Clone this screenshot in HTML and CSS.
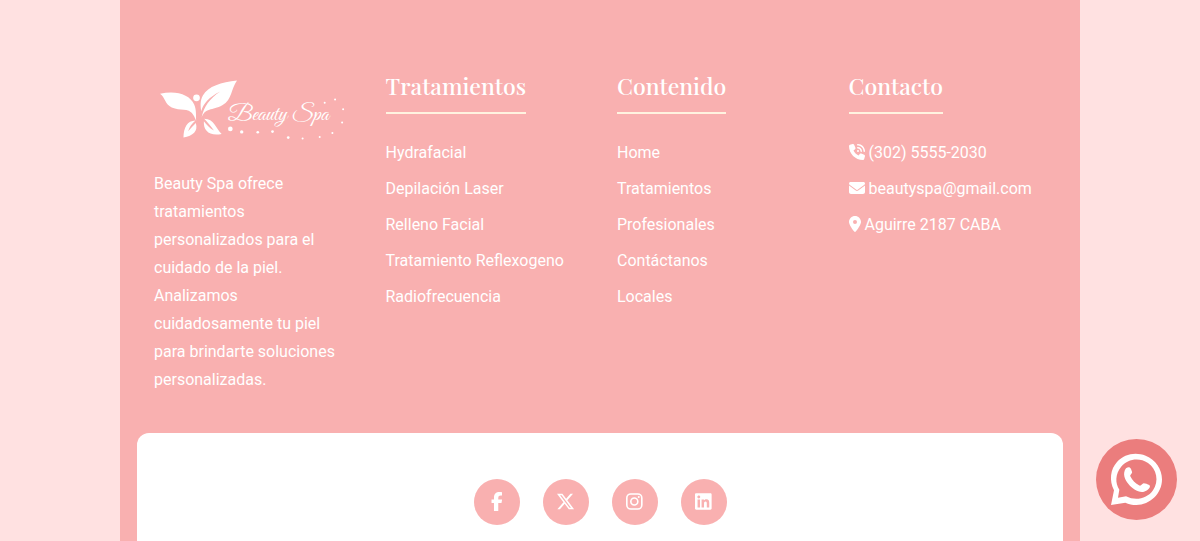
FILE: index.html
```html
<!DOCTYPE html>
<html lang="es">
<head>
<meta charset="utf-8">
<meta name="viewport" content="width=device-width, initial-scale=1">
<title>Beauty Spa</title>
<link rel="stylesheet" href="styles.css">
</head>
<body>
<footer class="footer">
  <div class="columns">
    <section class="column">
      <svg class="logo" viewBox="12 0 590 240" role="img" aria-label="Beauty Spa">
        <g fill="#fff">
          <path d="M30 71C78 60 119 73 132 103C139 119 137 134 138 152C132 134 119 115 84 91C108 108 124 123 129 132C113 112 91 123 65 112C44 102 46 83 30 71Z"/>
          <path d="M260 31C213 36 174 48 158 76C149 92 151 108 153 123C158 103 176 80 210 64C179 84 160 110 154 143C163 112 187 121 216 105C246 88 242 55 260 31Z"/>
          <path d="M100 202C101 171 111 152 136 151C126 159 117 171 114 183C122 174 129 166 137 158C144 184 129 195 100 202Z"/>
          <path d="M162 146C191 146 197 175 214 191C177 198 159 181 161 153C168 163 179 174 191 181C183 170 172 157 162 146Z"/>
          <circle cx="139" cy="83" r="10"/>
          <circle cx="240" cy="176" r="7"/>
          <circle cx="274" cy="185" r="5"/>
          <circle cx="322" cy="186" r="4"/>
          <circle cx="366" cy="184" r="4"/>
          <circle cx="413" cy="202" r="4"/>
          <circle cx="456" cy="205" r="3"/>
          <circle cx="507" cy="200" r="3"/>
          <circle cx="545" cy="188" r="3"/>
          <circle cx="574" cy="157" r="3"/>
          <circle cx="577" cy="117" r="3"/>
          <circle cx="553" cy="88" r="3"/>
          <circle cx="522" cy="98" r="3"/>
        </g>
        <text class="logo-text" x="233" y="149">Beauty Spa</text>
      </svg>
      <p class="about">Beauty Spa ofrece tratamientos personalizados para el cuidado de la piel. Analizamos cuidadosamente tu piel para brindarte soluciones personalizadas.</p>
    </section>
    <section class="column">
      <h2 class="title">Tratamientos</h2>
      <ul class="links">
        <li><a href="#">Hydrafacial</a></li>
        <li><a href="#">Depilación Laser</a></li>
        <li><a href="#">Relleno Facial</a></li>
        <li><a href="#">Tratamiento Reflexogeno</a></li>
        <li><a href="#">Radiofrecuencia</a></li>
      </ul>
    </section>
    <section class="column">
      <h2 class="title">Contenido</h2>
      <ul class="links">
        <li><a href="#">Home</a></li>
        <li><a href="#">Tratamientos</a></li>
        <li><a href="#">Profesionales</a></li>
        <li><a href="#">Contáctanos</a></li>
        <li><a href="#">Locales</a></li>
      </ul>
    </section>
    <section class="column">
      <h2 class="title">Contacto</h2>
      <ul class="links">
        <li><a href="#"><svg class="icon" viewBox="0 0 512 512" aria-hidden="true"><path d="M280 0C408.1 0 512 103.9 512 232c0 13.3-10.7 24-24 24s-24-10.7-24-24c0-101.6-82.4-184-184-184c-13.3 0-24-10.7-24-24s10.7-24 24-24zm8 192a32 32 0 1 1 0 64 32 32 0 1 1 0-64zm-32-72c0-13.3 10.7-24 24-24c75.1 0 136 60.9 136 136c0 13.3-10.7 24-24 24s-24-10.7-24-24c0-48.6-39.4-88-88-88c-13.3 0-24-10.7-24-24zM117.5 1.4c19.4-5.3 39.7 4.6 47.4 23.2l40 96c6.8 16.3 2.1 35.2-11.6 46.3L144 207.3c33.3 70.4 90.3 127.4 160.7 160.7L345 318.7c11.2-13.7 30-18.4 46.3-11.6l96 40c18.6 7.7 28.5 28 23.2 47.4l-24 88C481.8 499.9 466 512 448 512C200.6 512 0 311.4 0 64C0 46 12.1 30.2 29.5 25.4l88-24z"/></svg> (302) 5555-2030</a></li>
        <li><a href="#"><svg class="icon" viewBox="0 0 512 512" aria-hidden="true"><path d="M48 64C21.5 64 0 85.5 0 112c0 15.1 7.1 29.3 19.2 38.4L236.8 313.6c11.4 8.5 27 8.5 38.4 0L492.8 150.4c12.1-9.1 19.2-23.3 19.2-38.4c0-26.5-21.5-48-48-48H48zM0 176V384c0 35.3 28.7 64 64 64H448c35.3 0 64-28.7 64-64V176L294.4 339.2c-22.8 17.1-54 17.1-76.8 0L0 176z"/></svg> beautyspa@gmail.com</a></li>
        <li><a href="#"><svg class="icon icon-pin" viewBox="0 0 384 512" aria-hidden="true"><path d="M215.7 499.2C267 435 384 279.4 384 192C384 86 298 0 192 0S0 86 0 192c0 87.4 117 243 168.3 307.2c12.3 15.3 35.1 15.3 47.4 0zM192 128a64 64 0 1 1 0 128 64 64 0 1 1 0-128z"/></svg> Aguirre 2187 CABA</a></li>
      </ul>
    </section>
  </div>
  <div class="panel">
    <nav class="social" aria-label="Redes sociales">
      <a class="social-link" href="#" aria-label="Facebook"><svg viewBox="0 0 320 512" aria-hidden="true"><path d="M80 299.3V512H196V299.3h86.5l18-97.8H196V166.9c0-51.7 20.3-71.5 72.7-71.5c16.3 0 29.4 .4 37 1.2V7.9C291.4 4 256.4 0 236.2 0C129.3 0 80 50.5 80 159.4v42.1H14v97.8H80z"/></svg></a>
      <a class="social-link" href="#" aria-label="X"><svg viewBox="0 0 512 512" aria-hidden="true"><path d="M389.2 48h70.6L305.6 224.2 487 464H345L233.7 318.6 106.5 464H35.8L200.7 275.5 26.8 48H172.4L272.9 180.9 389.2 48zM364.4 421.8h39.1L151.1 88h-42L364.4 421.8z"/></svg></a>
      <a class="social-link" href="#" aria-label="Instagram"><svg viewBox="0 0 448 512" aria-hidden="true"><rect x="22" y="54" width="404" height="404" rx="108" fill="none" stroke="#fff" stroke-width="44"/><circle cx="224" cy="256" r="94" fill="none" stroke="#fff" stroke-width="44"/><circle cx="344" cy="136" r="27"/></svg></a>
      <a class="social-link" href="#" aria-label="LinkedIn"><svg viewBox="0 0 448 512" aria-hidden="true"><path d="M416 32H31.9C14.3 32 0 46.5 0 64.3v383.4C0 465.5 14.3 480 31.9 480H416c17.6 0 32-14.5 32-32.3V64.3c0-17.8-14.4-32.3-32-32.3zM135.4 416H69V202.2h66.5V416zm-33.2-243c-21.3 0-38.5-17.3-38.5-38.5S80.9 96 102.2 96c21.2 0 38.5 17.3 38.5 38.5 0 21.3-17.2 38.5-38.5 38.5zm282.1 243h-66.4V312c0-24.8-.5-56.7-34.5-56.7-34.6 0-39.9 27-39.9 54.9V416h-66.4V202.2h63.7v29.2h.9c8.9-16.8 30.6-34.5 62.9-34.5 67.2 0 79.7 44.3 79.7 101.9V416z"/></svg></a>
    </nav>
  </div>
</footer>
<a class="whatsapp" href="#" aria-label="WhatsApp">
  <svg viewBox="0 0 243 243" aria-hidden="true">
    <path fill="#fff" fill-rule="evenodd" d="M45 198L54 154C39 124 43 91 63 69C85 44 119 38 149 50C179 62 198 90 198 121C198 164 162 198 121 198C109 198 98 195 88 191ZM66 176L90 172C119 187 154 179 171 154C190 126 182 90 156 72C129 54 94 60 75 84C58 105 57 132 70 152Z"/>
    <path fill="#fff" d="M90 88C97 83 102 84 105 90L108 98C110 103 101 107 103 112C109 124 117 132 129 139C135 143 138 134 143 133C148 133 155 136 160 138C167 145 152 156 144 158C128 162 108 149 98 136C87 123 78 104 90 88Z"/>
  </svg>
</a>
</body>
</html>
```
FILE: styles.css
```css
* {
  box-sizing: border-box;
}

body {
  margin: 0;
  background: #ffe1e1;
  color: #fff;
  font-family: Roboto, sans-serif;
  font-size: 16px;
}

a {
  color: inherit;
  text-decoration: none;
}

.footer {
  display: flex;
  flex-direction: column;
  width: 80%;
  min-height: 100vh;
  margin: 0 auto;
  padding: 70px 17px 0;
  background: #f9b0b0;
}

.columns {
  display: grid;
  grid-template-columns: repeat(4, minmax(0, 1fr));
  padding-bottom: 39px;
}

.column {
  padding: 0 17px;
}

.logo {
  display: block;
  width: 100%;
}

.logo-text {
  fill: #fff;
  font-family: "Great Vibes", "Dancing Script", "Liberation Serif", serif;
  font-size: 68px;
}

.about {
  margin: 20px 0 0;
  line-height: 28px;
}

.title {
  width: fit-content;
  margin: 0 0 21px;
  padding-bottom: 10px;
  border-bottom: 2px solid #fff3e0;
  font-family: "Playfair Display", "Liberation Serif", serif;
  font-size: 23px;
  font-weight: 500;
  line-height: 32px;
}

.links {
  margin: 0;
  padding: 0;
  list-style: none;
  line-height: 36px;
  white-space: nowrap;
}

.icon {
  width: 16px;
  height: 16px;
  fill: #fff;
  vertical-align: -2px;
}

.icon-pin {
  width: 12px;
}

.panel {
  flex: 1;
  padding: 46px 16px 16px;
  border-radius: 12px 12px 0 0;
  background: #fff;
}

.social {
  display: flex;
  justify-content: center;
  gap: 23px;
}

.social-link {
  display: flex;
  align-items: center;
  justify-content: center;
  width: 46px;
  height: 46px;
  padding-bottom: 2px;
  border-radius: 50%;
  background: #f9b0b0;
}

.social-link svg {
  height: 19px;
  fill: #fff;
}

.whatsapp {
  position: fixed;
  right: 23px;
  bottom: 21px;
  width: 81px;
  height: 81px;
  border-radius: 50%;
  background: #eb7d7d;
}

.whatsapp svg {
  display: block;
}
```
